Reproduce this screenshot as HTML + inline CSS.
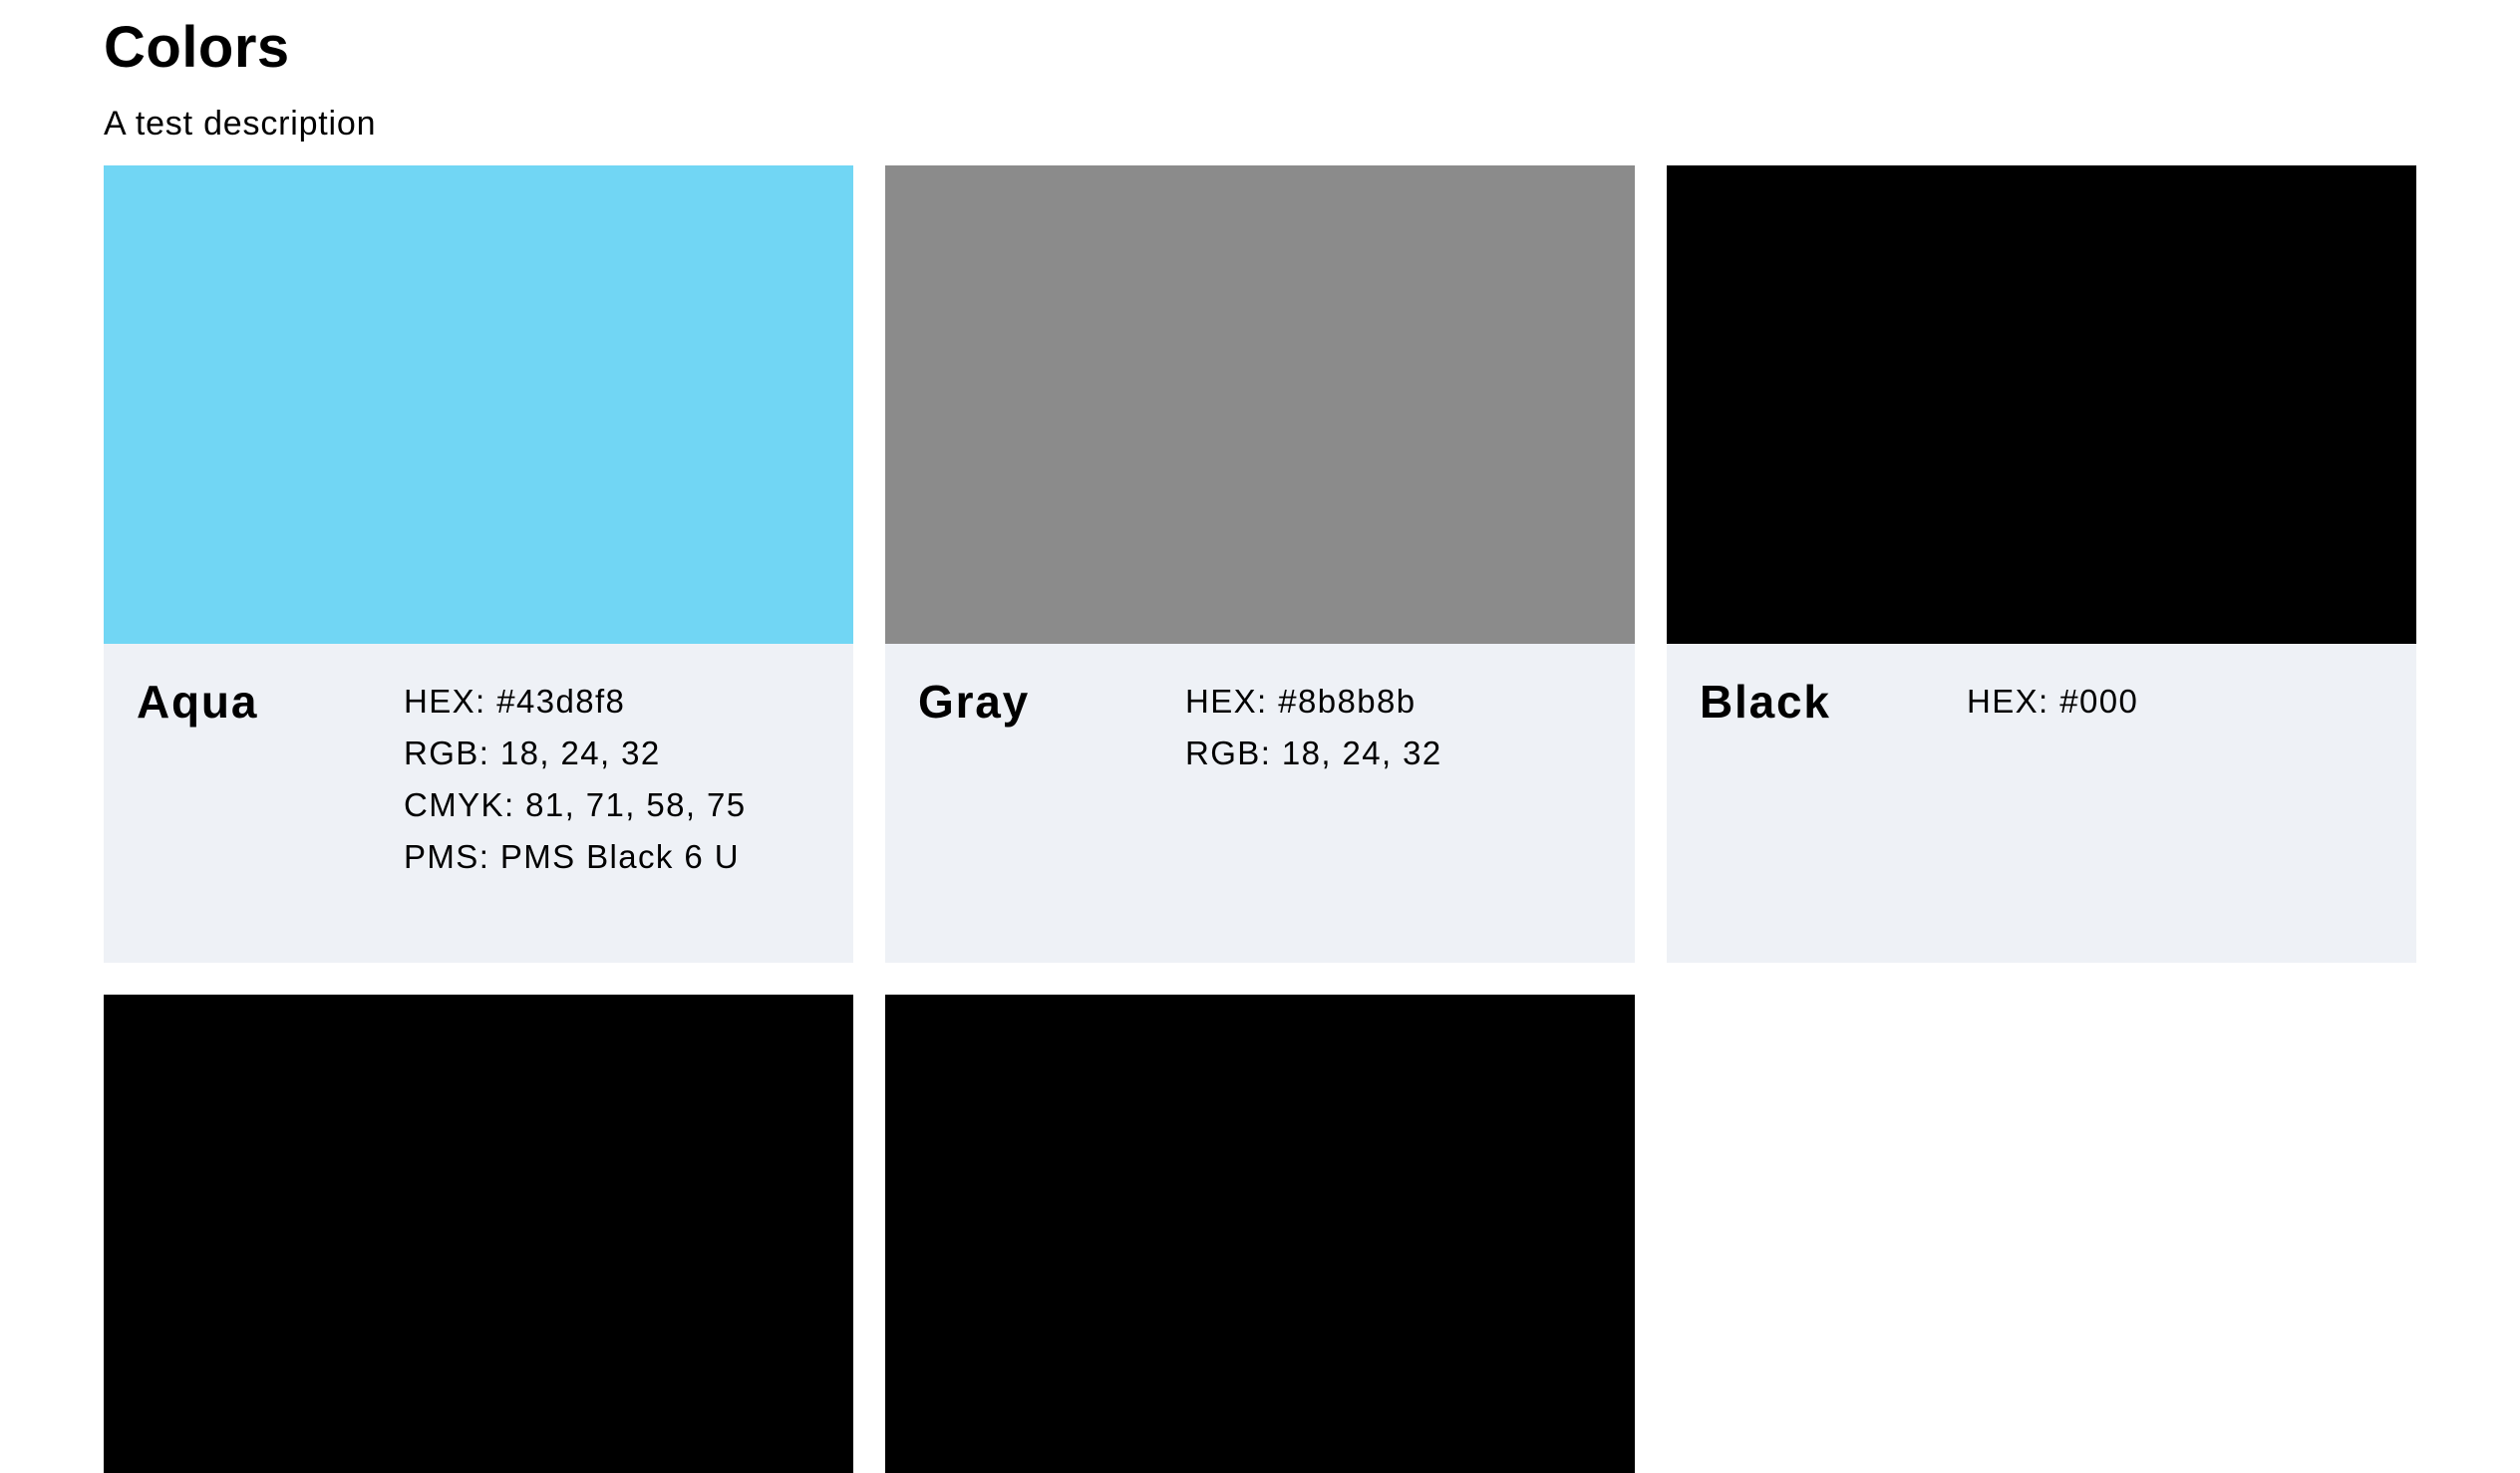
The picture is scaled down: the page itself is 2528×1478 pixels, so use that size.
<!DOCTYPE html>
<html><head><meta charset="utf-8"><style>
html,body{margin:0;padding:0;background:#fff;}
body{width:2528px;height:1304px;overflow:hidden;position:relative;font-family:"Liberation Sans",Arial,sans-serif;color:#000;}
h1{position:absolute;left:104px;top:12px;margin:0;font-size:58px;font-weight:bold;line-height:72px;letter-spacing:0.5px;}
.desc{position:absolute;left:104px;top:104px;font-size:34px;line-height:40px;letter-spacing:0.8px;}
.card{position:absolute;width:752px;}
.sw{height:480px;}
.info{height:320px;background:#eef1f6;box-sizing:border-box;position:relative;}
.name{position:absolute;left:33px;top:32px;font-size:46px;font-weight:bold;line-height:52px;letter-spacing:1.8px;}
.vals{position:absolute;left:301px;top:32px;font-size:33px;line-height:52px;letter-spacing:1.4px;}
</style></head><body>
<h1>Colors</h1>
<div class="desc">A test description</div>

<div class="card" style="left:104px;top:166px;">
 <div class="sw" style="background:#71d6f4"></div>
 <div class="info"><div class="name">Aqua</div><div class="vals">HEX: #43d8f8<br>RGB: 18, 24, 32<br>CMYK: 81, 71, 58, 75<br>PMS: PMS Black 6 U</div></div>
</div>
<div class="card" style="left:888px;top:166px;">
 <div class="sw" style="background:#8b8b8b"></div>
 <div class="info"><div class="name">Gray</div><div class="vals">HEX: #8b8b8b<br>RGB: 18, 24, 32</div></div>
</div>
<div class="card" style="left:1672px;top:166px;">
 <div class="sw" style="background:#000"></div>
 <div class="info"><div class="name">Black</div><div class="vals">HEX: #000</div></div>
</div>
<div class="card" style="left:104px;top:998px;">
 <div class="sw" style="background:#000"></div>
</div>
<div class="card" style="left:888px;top:998px;">
 <div class="sw" style="background:#000"></div>
</div>
</body></html>
